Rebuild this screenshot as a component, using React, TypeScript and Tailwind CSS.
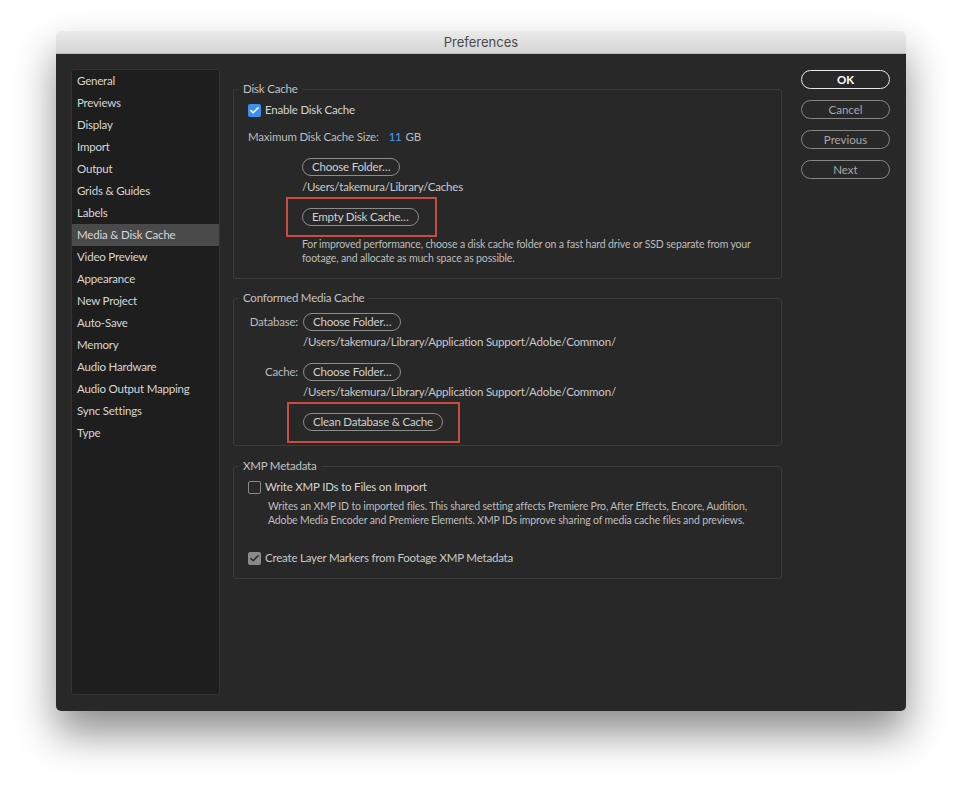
import { Check } from 'lucide-react'

const sidebarItems = [
  'General',
  'Previews',
  'Display',
  'Import',
  'Output',
  'Grids & Guides',
  'Labels',
  'Media & Disk Cache',
  'Video Preview',
  'Appearance',
  'New Project',
  'Auto-Save',
  'Memory',
  'Audio Hardware',
  'Audio Output Mapping',
  'Sync Settings',
  'Type',
]

function PillButton({ children }: { children: React.ReactNode }) {
  return (
    <div className="h-[18px] inline-flex items-center px-[9px] rounded-full border-[1.5px] border-[#8c8c8c] text-[11.5px] tracking-[-0.2px] leading-none text-[#d0d0d0] whitespace-nowrap">
      {children}
    </div>
  )
}

function Checkbox({ state }: { state: 'blue' | 'off' | 'gray' }) {
  if (state === 'off') {
    return <div className="w-[13px] h-[13px] rounded-[2px] border-[1.5px] border-[#8a8a8a]" />
  }
  return (
    <div
      className={
        state === 'blue'
          ? 'w-[13px] h-[13px] rounded-[2px] bg-[#3b8ff0] flex items-center justify-center'
          : 'w-[13px] h-[13px] rounded-[2px] bg-[#8a8a8a] flex items-center justify-center'
      }
    >
      <Check
        className={state === 'blue' ? 'w-[11px] h-[11px] text-white' : 'w-[11px] h-[11px] text-[#2e2e2e]'}
        strokeWidth={3.5}
      />
    </div>
  )
}

function Group({ title, className, children }: { title: string; className?: string; children: React.ReactNode }) {
  return (
    <fieldset className={`border border-[#3c3c3c] rounded-[3px] ${className ?? ''}`}>
      <legend className="ml-[5px] px-[4px] text-[11.5px] tracking-[-0.2px] leading-[16px] text-[#c2c2c2]">{title}</legend>
      {children}
    </fieldset>
  )
}

function DialogButton({ label, primary }: { label: string; primary?: boolean }) {
  return (
    <div
      className={
        primary
          ? 'h-[19px] w-[89px] rounded-full border-[1.5px] border-[#e8e8e8] flex items-center justify-center text-[11.5px] font-bold text-white'
          : 'h-[19px] w-[89px] rounded-full border-[1.5px] border-[#858585] flex items-center justify-center text-[11.5px] text-[#a9a9a9]'
      }
    >
      {label}
    </div>
  )
}

export default function App() {
  return (
    <div className="w-[962px] h-[791px] bg-white pt-[31px] pl-[56px] font-['Lato','Open_Sans',sans-serif]">
      <div className="w-[850px] h-[680px] rounded-[5px] shadow-[0_22px_40px_rgba(0,0,0,0.45)] overflow-hidden flex flex-col">
        {/* title bar */}
        <div className="h-[23px] bg-gradient-to-b from-[#ebebeb] to-[#d5d5d5] border-b border-[#b8b8b8] flex items-center justify-center pt-[2px]">
          <span className="text-[13px] text-[#4a4a4a] font-['Inter',sans-serif]">Preferences</span>
        </div>

        <div className="flex-1 bg-[#282828] flex pl-[15px] pt-[15px] pb-[16px]">
          {/* sidebar */}
          <div className="w-[149px] h-[626px] bg-[#1e1e1e] border border-[#333333] rounded-[3px]">
            {sidebarItems.map((item) => (
              <div
                key={item}
                className={
                  item === 'Media & Disk Cache'
                    ? 'h-[22px] flex items-center px-[5px] bg-[#4a4a4a] text-[11.5px] tracking-[-0.2px] text-[#d6d6d6]'
                    : 'h-[22px] flex items-center px-[5px] text-[11.5px] tracking-[-0.2px] text-[#d6d6d6]'
                }
              >
                {item}
              </div>
            ))}
          </div>

          {/* content */}
          <div className="w-[549px] ml-[13px] pt-[12px] text-[11.5px] tracking-[-0.2px] text-[#c8c8c8]">
            <Group title="Disk Cache">
              <div className="pl-[14px] pb-[13px]">
                <div className="mt-[6px] h-[14px] flex items-center gap-[4px]">
                  <Checkbox state="blue" />
                  <span className="text-[#d4d4d4]">Enable Disk Cache</span>
                </div>
                <div className="mt-[13px] h-[14px] flex items-center text-[#bcbcbc]">
                  <span>Maximum Disk Cache Size:</span>
                  <span className="ml-[10px] text-[#4a9ef0]">11</span>
                  <span className="ml-[4px]">GB</span>
                </div>
                <div className="mt-[14px] ml-[54px]">
                  <PillButton>Choose Folder…</PillButton>
                </div>
                <div className="mt-[4px] ml-[54px] h-[14px] leading-[14px]">/Users/takemura/Library/Caches</div>
                <div className="mt-[3px] ml-[38px] w-[151px] h-[40px] border-2 border-[#cc4b40] pl-[14px] pt-[9px]">
                  <PillButton>Empty Disk Cache…</PillButton>
                </div>
                <p className="ml-[54px] text-[10.5px] tracking-[-0.15px] leading-[14px] text-[#bdbdbd] whitespace-nowrap">
                  For improved performance, choose a disk cache folder on a fast hard drive or SSD separate from your
                  <br />
                  footage, and allocate as much space as possible.
                </p>
              </div>
            </Group>

            <Group title="Conformed Media Cache" className="mt-[11px]">
              <div className="pb-[2px]">
                <div className="mt-[7px] flex items-center">
                  <span className="w-[64px] text-right text-[#bcbcbc]">Database:</span>
                  <span className="ml-[5px]">
                    <PillButton>Choose Folder…</PillButton>
                  </span>
                </div>
                <div className="mt-[4px] ml-[69px] h-[14px] leading-[14px]">
                  /Users/takemura/Library/Application Support/Adobe/Common/
                </div>
                <div className="mt-[14px] flex items-center">
                  <span className="w-[64px] text-right text-[#bcbcbc]">Cache:</span>
                  <span className="ml-[5px]">
                    <PillButton>Choose Folder…</PillButton>
                  </span>
                </div>
                <div className="mt-[4px] ml-[69px] h-[14px] leading-[14px]">
                  /Users/takemura/Library/Application Support/Adobe/Common/
                </div>
                <div className="mt-[3px] ml-[53px] w-[173px] h-[41px] border-2 border-[#cc4b40] pl-[14px] pt-[9px]">
                  <PillButton>Clean Database &amp; Cache</PillButton>
                </div>
              </div>
            </Group>

            <Group title="XMP Metadata" className="mt-[12px]">
              <div className="pl-[14px] pb-[13px]">
                <div className="mt-[6px] h-[14px] flex items-center gap-[4px]">
                  <Checkbox state="off" />
                  <span className="text-[#d4d4d4]">Write XMP IDs to Files on Import</span>
                </div>
                <p className="mt-[5px] ml-[20px] text-[10.5px] tracking-[-0.15px] leading-[14px] text-[#bdbdbd] whitespace-nowrap">
                  Writes an XMP ID to imported files. This shared setting affects Premiere Pro, After Effects, Encore,
                  Audition,
                  <br />
                  Adobe Media Encoder and Premiere Elements. XMP IDs improve sharing of media cache files and previews.
                </p>
                <div className="mt-[24px] h-[14px] flex items-center gap-[4px]">
                  <Checkbox state="gray" />
                  <span className="text-[#c8c8c8]">Create Layer Markers from Footage XMP Metadata</span>
                </div>
              </div>
            </Group>
          </div>

          {/* buttons */}
          <div className="ml-[19px] pt-[1px] flex flex-col gap-[11px]">
            <DialogButton label="OK" primary />
            <DialogButton label="Cancel" />
            <DialogButton label="Previous" />
            <DialogButton label="Next" />
          </div>
        </div>
      </div>
    </div>
  )
}
